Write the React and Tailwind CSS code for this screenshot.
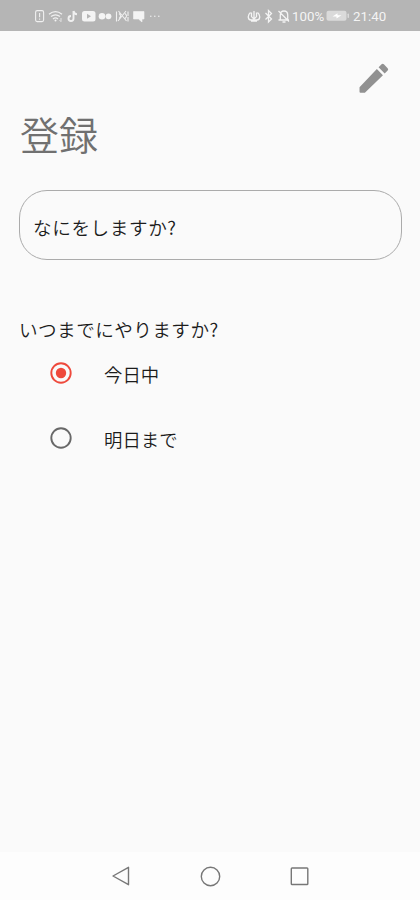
import React from 'react';

function StatusLeft() {
  return (
    <svg width="128" height="16" viewBox="0 0 128 16" fill="none" stroke="#f0f0f0" strokeWidth="1.1">
      <rect x="1.6" y="2.6" width="8" height="11" rx="1.6" />
      <path d="M5.6 5v4.2M5.6 10.4v1.4" />
      <path d="M15 6.2q6.5-5 13 0M17 8.6q4.500-3.600 9 0M19 10.900q2.500-2 5 0" strokeWidth="1.300" />
      <circle cx="21.500" cy="12.600" r="1" fill="#f4f4f4" stroke="none" />
      <path d="M27 10v3.500M25.500 12.200l1.500 1.500" strokeWidth=".8" />
      <path d="M39.500 3v7.500a2.500 2.500 0 1 1-2.500-2.500M39.500 3q.5 3 3.500 3.200" strokeWidth="1.900" />
      <rect x="48" y="3" width="13.500" height="10.500" rx="2.500" fill="#f4f4f4" stroke="none" />
      <path d="M53 5.700v5l4-2.500z" fill="#b5b5b5" stroke="none" />
      <circle cx="68" cy="8.300" r="3.300" fill="#f4f4f4" stroke="none" />
      <circle cx="74.500" cy="8.300" r="2.900" fill="#f4f4f4" stroke="none" />
      <path d="M82.500 3.500v10M84.500 3l8 10M92 3l-8 10M94 3.500v4.500M91 5.500q3 2.500 0 5M94 9v4.500M85 5.500q3 2.500 0 5" />
      <path d="M99.500 3.500H110v7.500h-2v3l-3.500-3h-5z" fill="#f4f4f4" stroke="#f4f4f4" strokeWidth=".6" strokeLinejoin="round" />
      <g fill="#eeeeee" stroke="none">
        <circle cx="116.800" cy="8.300" r=".8" />
        <circle cx="120.800" cy="8.300" r=".8" />
        <circle cx="124.800" cy="8.300" r=".8" />
      </g>
    </svg>
  );
}

function StatusSymbols() {
  return (
    <svg width="44" height="16" viewBox="0 0 44 16" fill="none" stroke="#f4f4f4" strokeWidth="1.300">
      <path d="M3.500 4.500C0 7.500 1 12 4 12h6C13 12 14 7.500 10.500 4.500M7 3v9M4.500 4.500v4q2.500 4 5 0v-4M4 13.200h6" />
      <path d="M18.500 5l6 6-3 3V2.500l3 3-6 6" />
      <path d="M31.500 12h10.500M33.300 11.500V7q0-4 3.700-4t3.700 4v4.500M35.500 14h3M31.500 3l10.500 10.500" />
    </svg>
  );
}

function Battery() {
  return (
    <svg width="24" height="12" viewBox="0 0 24 12">
      <rect x=".5" y=".8" width="20" height="10" rx="2" fill="#dadada" />
      <rect x="21.500" y="3.500" width="1.500" height="4.500" rx=".7" fill="#dadada" />
      <path d="M6.500 6.600l5-3.300v2h4l-5 3.300v-2z" fill="#fff" />
    </svg>
  );
}

function Option({ label, selected }) {
  return (
    <label className="flex h-[65px] items-center">
      <input type="radio" name="deadline" defaultChecked={selected} className="sr-only" />
      <svg width="24" height="24" viewBox="0 0 24 24" fill="none" className="mt-[-1px]">
        <circle cx="12" cy="12" r="9.700" stroke={selected ? '#ee493c' : '#686868'} strokeWidth="1.900" />
        {selected && <circle cx="12" cy="12" r="5.200" fill="#ee493c" />}
      </svg>
      <span className="ml-[31px] text-[18.4px] leading-6">{label}</span>
    </label>
  );
}

export default function App() {
  return (
    <div className="flex h-[900px] w-[420px] flex-col overflow-hidden bg-[#fafafa] font-['Noto_Sans_CJK_JP',sans-serif] font-[350] text-[#1c1c1c]">
      <header className="flex h-[31px] shrink-0 items-center bg-[#b5b5b5] pt-px pl-[34px] font-[Roboto,sans-serif] text-[13.3px] font-normal text-[#f4f4f4]">
        <StatusLeft />
        <div className="ml-[85px] flex items-center">
          <StatusSymbols />
          <span className="ml-px w-[34px] pt-px whitespace-nowrap">100%</span>
          <Battery />
          <span className="ml-[3px] pt-px">21:40</span>
        </div>
      </header>
      <main className="flex flex-1 flex-col">
        <div className="flex h-[67px] justify-end pt-7 pr-[27px]">
          <button aria-label="編集" className="h-[39px]">
            <svg width="39" height="39" viewBox="0 0 24 24" fill="#919191">
              <path d="M3.400 17.400V20.100q0 .6.600.6H6.700L17.810 9.940l-3.750-3.750zM20.710 7.040a1 1 0 0 0 0-1.410l-2.340-2.340a1 1 0 0 0-1.410 0l-1.830 1.830 3.750 3.750 1.830-1.830z" />
            </svg>
          </button>
        </div>
        <h1 className="ml-[20px] h-[92px] pt-[7px] text-[39px] leading-[56px] text-[#707070]">登録</h1>
        <div className="mr-[18px] ml-[19px] flex h-[70px] items-center rounded-[28px] border border-[#ababab] pt-[3px] pl-[13px] text-[18.6px] tracking-[0.6px]">なにをしますか?</div>
        <section className="pt-[57px]">
          <h2 className="ml-[19px] h-6 text-[18.6px] leading-6 tracking-[0.45px]">いつまでにやりますか?</h2>
          <div className="ml-[49px]">
            <Option label="今日中" selected />
            <Option label="明日まで" />
          </div>
        </section>
      </main>
      <nav className="flex h-[48px] items-center justify-between bg-[#fdfdfd] px-[109px]">
        <svg width="22" height="22" viewBox="0 0 22 22" fill="none" stroke="#777" strokeWidth="1.400" strokeLinejoin="round"><path d="M19.500 2.300v17.400L4 11z" /></svg>
        <svg width="22" height="22" viewBox="0 0 22 22" fill="none" stroke="#777" strokeWidth="1.400"><circle cx="11.500" cy="11.500" r="9.200" /></svg>
        <svg width="22" height="22" viewBox="0 0 22 22" fill="none" stroke="#777" strokeWidth="1.400"><rect x="2.300" y="3" width="16.500" height="16.500" rx=".8" /></svg>
      </nav>
    </div>
  );
}
